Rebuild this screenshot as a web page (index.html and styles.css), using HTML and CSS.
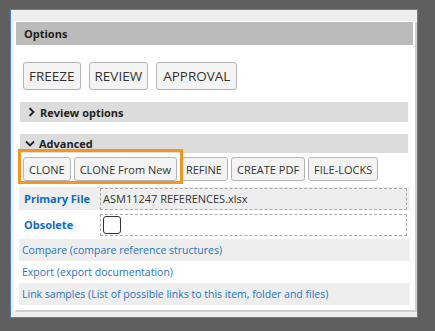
FILE: index.html
```html
<!DOCTYPE html>
<html lang="en">
  <head>
    <meta charset="UTF-8" />
    <meta name="viewport" content="width=device-width, initial-scale=1.0" />
    <title>Options</title>
    <link rel="stylesheet" href="styles.css">
  </head>
  <body>
    <div class="window">
      <div class="panel">
        <div class="panel-header">Options</div>

        <div class="main-buttons">
          <button class="btn btn-big">FREEZE</button>
          <button class="btn btn-big">REVIEW</button>
          <button class="btn btn-big">APPROVAL</button>
        </div>

        <div class="section-bar section-review">
          <svg class="chevron" width="7" height="10" viewBox="0 0 7 10">
            <polyline points="1.5,1 5.5,5 1.5,9" fill="none" stroke="#222" stroke-width="1.8" />
          </svg>
          Review options
        </div>

        <div class="section-bar section-advanced">
          <svg class="chevron chevron-down" width="10" height="7" viewBox="0 0 10 7">
            <polyline points="1,1.5 5,5.5 9,1.5" fill="none" stroke="#222" stroke-width="1.8" />
          </svg>
          Advanced
        </div>

        <div class="small-buttons">
          <button class="btn btn-small">CLONE</button>
          <button class="btn btn-small">CLONE From New</button>
          <button class="btn btn-small">REFINE</button>
          <button class="btn btn-small">CREATE PDF</button>
          <button class="btn btn-small">FILE-LOCKS</button>
        </div>

        <div class="field-row shaded">
          <div class="field-label">Primary File</div>
          <div class="field-value">ASM11247 REFERENCES.xlsx</div>
        </div>
        <div class="field-row">
          <div class="field-label">Obsolete</div>
          <div class="field-value"><span class="checkbox"></span></div>
        </div>

        <div class="link-row shaded"><a href="#">Compare (compare reference structures)</a></div>
        <div class="link-row"><a href="#">Export (export documentation)</a></div>
        <div class="link-row shaded"><a href="#">Link samples (List of possible links to this item, folder and files)</a></div>

        <div class="highlight"></div>
      </div>
    </div>
  </body>
</html>
```

FILE: styles.css
```css
* {
  margin: 0;
  padding: 0;
  box-sizing: border-box;
}

body {
  font-family: "Open Sans", "Noto Sans", sans-serif;
  background-color: #5f5f5f;
  padding: 9px 17px 13px 10px;
  color: #333;
}

.window {
  width: 408px;
  height: 309px;
  border: 1px solid #4c7ee0;
  background-color: #eeeeee;
  padding: 11px 2px 0 3px;
}

.panel {
  position: relative;
  background-color: #fff;
  height: 289px;
  padding: 1px 2px;
  box-shadow: 2px 2px 0 #cfcfcf;
}

.panel-header {
  height: 23px;
  line-height: 23px;
  background-color: #bbbbbb;
  padding-left: 8px;
  font-weight: bold;
  font-size: 11px;
  color: #222;
}

.main-buttons {
  display: flex;
  gap: 8px;
  margin: 17px 0 0 7px;
}

.btn {
  font-family: "Open Sans", "Noto Sans", sans-serif;
  background-color: #f4f4f4;
  border: 1px solid #b4b4b4;
  border-radius: 3px;
  color: #333;
}

.btn-big {
  height: 28px;
  padding: 0 5px;
  font-size: 13.5px;
}

.btn-big:last-child {
  padding: 0 6px;
}

.section-bar {
  display: flex;
  align-items: center;
  background-color: #dcdcdc;
  margin: 0 5px 0 4px;
  font-weight: bold;
  font-size: 11px;
  color: #222;
}

.section-review {
  height: 20px;
  margin-top: 12px;
  padding-left: 8px;
}

.section-advanced {
  height: 19px;
  margin-top: 12px;
  padding-left: 5px;
}

.chevron {
  margin-right: 5px;
}

.chevron-down {
  margin-right: 4px;
}

.small-buttons {
  display: flex;
  gap: 3px;
  margin: 4px 0 0 7px;
}

.btn-small {
  height: 24px;
  padding: 0 5px;
  font-size: 11px;
}

.field-row {
  display: flex;
  align-items: center;
  height: 23px;
  margin: 3px 3px 0 3px;
}

.small-buttons + .field-row {
  margin-top: 6px;
}

.shaded {
  background-color: #eeeeee;
}

.field-label {
  width: 81px;
  padding-left: 5px;
  font-weight: bold;
  font-size: 11px;
  color: #0f6cbf;
}

.field-value {
  flex: 1;
  height: 22px;
  margin-right: 3px;
  border: 1px dashed #aaa;
  padding-left: 2px;
  font-size: 11px;
  line-height: 20px;
  color: #333;
}

.checkbox {
  display: inline-block;
  width: 18px;
  height: 18px;
  margin-top: 1px;
  border: 1.5px solid #333;
  border-radius: 3px;
  background-color: #fff;
}

.link-row {
  height: 22px;
  line-height: 22px;
  margin: 0 3px;
  padding-left: 3px;
  font-size: 10.5px;
}

.field-row + .link-row {
  margin-top: 3px;
}

.link-row a {
  color: #1f74c4;
  text-decoration: none;
}

.highlight {
  position: absolute;
  left: 4px;
  top: 128px;
  width: 165px;
  height: 35px;
  border: 3px solid #f7941d;
}
```
